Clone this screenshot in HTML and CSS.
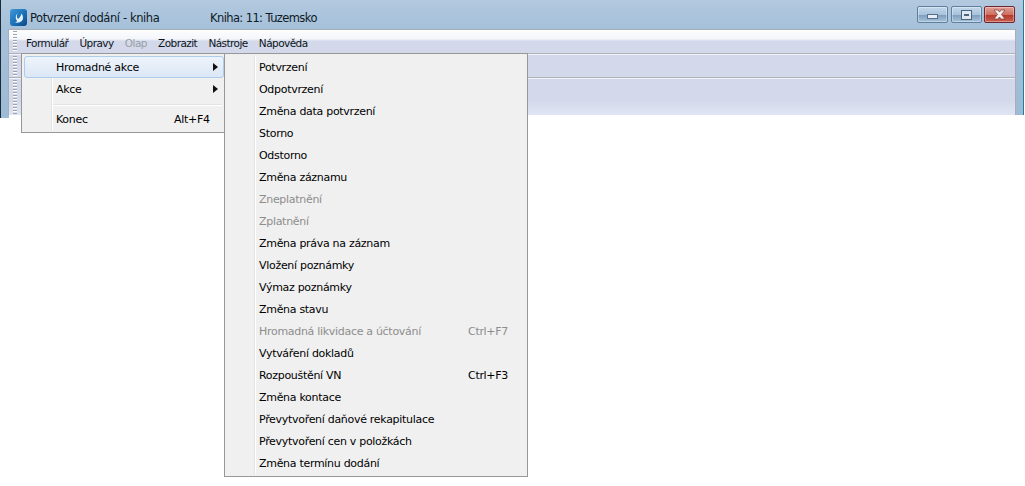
FILE: index.html
```html
<!DOCTYPE html>
<html lang="cs">
<head>
<meta charset="utf-8">
<title>Potvrzení dodání - kniha</title>
<link rel="stylesheet" href="styles.css">
</head>
<body>
<div class="window">
  <div class="titlebar">
    <svg class="app-icon" width="17" height="17" viewBox="0 0 17 17"><defs><linearGradient id="ig" x1="0" y1="0" x2="1" y2="1"><stop offset="0" stop-color="#3f9bd8"/><stop offset=".55" stop-color="#1b6fb6"/><stop offset="1" stop-color="#0d4585"/></linearGradient></defs><rect width="17" height="17" rx="3" fill="url(#ig)"/><path d="M8 4C6.500 6 6.500 8.500 8 10C9.500 9 11 7 11.500 4.500C13 6.500 13.500 9 12.500 11C11 13.500 8 14 5 13.500C7 13 7.500 12 6.500 11C5 9 6 5.500 8 4Z" fill="#e6f2fa"/></svg>
    <span class="title-main">Potvrzení dodání - kniha</span>
    <span class="title-sub">Kniha: 11: Tuzemsko</span>
    <div class="caption-buttons">
      <div class="cap-btn"><span class="glyph-min"></span></div>
      <div class="cap-btn"><span class="glyph-max"></span></div>
      <div class="cap-btn cap-close"><svg width="17" height="11" viewBox="0 0 17 11"><path d="M3 1H7L8.500 3L10 1H14L10.500 5.500L14 10H10L8.500 8L7 10H3L6.500 5.500Z" fill="#f4eeee" stroke="#7d3a3a" stroke-width=".7"/></svg></div>
    </div>
  </div>
  <div class="client">
    <div class="band band-menu">
      <div class="grip"></div>
      <nav class="menubar">
        <span class="mi">Formulář</span>
        <span class="mi">Úpravy</span>
        <span class="mi mi-off">Olap</span>
        <span class="mi">Zobrazit</span>
        <span class="mi">Nástroje</span>
        <span class="mi">Nápověda</span>
      </nav>
    </div>
    <div class="band band-tool"><div class="grip"></div></div>
    <div class="band band-last"><div class="grip"></div></div>
  </div>
</div>

<div class="menu menu-main">
  <div class="row row-hot"><span class="label">Hromadné akce</span><span class="arrow"></span></div>
  <div class="row"><span class="label">Akce</span><span class="arrow"></span></div>
  <div class="sep"></div>
  <div class="row row-end"><span class="label">Konec</span><span class="key">Alt+F4</span></div>
</div>

<div class="menu menu-sub">
  <div class="row"><span class="label">Potvrzení</span></div>
  <div class="row"><span class="label">Odpotvrzení</span></div>
  <div class="row"><span class="label">Změna data potvrzení</span></div>
  <div class="row"><span class="label">Storno</span></div>
  <div class="row"><span class="label">Odstorno</span></div>
  <div class="row"><span class="label">Změna záznamu</span></div>
  <div class="row row-off"><span class="label">Zneplatnění</span></div>
  <div class="row row-off"><span class="label">Zplatnění</span></div>
  <div class="row"><span class="label">Změna práva na záznam</span></div>
  <div class="row"><span class="label">Vložení poznámky</span></div>
  <div class="row"><span class="label">Výmaz poznámky</span></div>
  <div class="row"><span class="label">Změna stavu</span></div>
  <div class="row row-off"><span class="label">Hromadná likvidace a účtování</span><span class="key">Ctrl+F7</span></div>
  <div class="row"><span class="label">Vytváření dokladů</span></div>
  <div class="row"><span class="label">Rozpouštění VN</span><span class="key">Ctrl+F3</span></div>
  <div class="row"><span class="label">Změna kontace</span></div>
  <div class="row"><span class="label">Převytvoření daňové rekapitulace</span></div>
  <div class="row"><span class="label">Převytvoření cen v položkách</span></div>
  <div class="row"><span class="label">Změna termínu dodání</span></div>
</div>
</body>
</html>
```
FILE: styles.css
```css
* { box-sizing: border-box; }
html, body { margin: 0; padding: 0; background: #fff; }
body {
  width: 1025px;
  height: 486px;
  overflow: hidden;
  position: relative;
  font-family: "DejaVu Sans", sans-serif;
  font-size: 11px;
  letter-spacing: -0.3px;
  color: #000;
}
.window {
  position: relative;
  width: 1024px;
  height: 115px;
  background: linear-gradient(#b2c9de 0, #a5c0da 30px, #9dbbd6 100%);
  border-left: 1px solid #1a2a36;
  border-right: 1px solid #1e7f9a;
  padding: 0 7px;
  display: flex;
  flex-direction: column;
}
.window::after {
  content: "";
  position: absolute;
  left: -1px;
  top: 115px;
  width: 8px;
  height: 3px;
  background: #9dbbd6;
  border-left: 1px solid #1a2a36;
}
.titlebar {
  height: 29px;
  flex: none;
  display: flex;
  align-items: center;
  padding-left: 2px;
  padding-top: 6px;
  color: #0e1a26;
  font-size: 11.5px;
  letter-spacing: -0.4px;
}
.app-icon { flex: none; margin-right: 3px; }
.title-main { width: 180px; }
.title-sub { letter-spacing: -0.6px; }
.caption-buttons { margin-left: auto; display: flex; gap: 3px; margin-right: 1px; margin-top: -6px; }
.cap-btn {
  width: 31px;
  height: 17px;
  border: 1px solid #5f7f9e;
  border-radius: 2px;
  background: linear-gradient(#c4d8ea 0, #a8c3dc 50%, #7f9fbe 55%, #a7c3da 100%);
  box-shadow: inset 0 0 0 1px rgba(255,255,255,.35);
  display: flex;
  align-items: center;
  justify-content: center;
}
.cap-close {
  margin-left: -1px;
  border-color: #6f2630;
  background: linear-gradient(#e0a097 0, #cf6f60 50%, #b63a2c 55%, #c8604f 100%);
}
.glyph-min { width: 11px; height: 5px; margin-top: 4px; background: #e8eef4; border: 1px solid #56708c; }
.glyph-max {
  width: 11px;
  height: 10px;
  background: #dfe8f0;
  border: 1px solid #4a6580;
  display: flex;
  align-items: center;
  justify-content: center;
}
.glyph-max::after { content: ""; width: 5px; height: 2px; background: #4a6580; }
.client {
  flex: 1;
  border: 1px solid #a9adb5;
  border-bottom: 0;
  display: flex;
  flex-direction: column;
}
.band {
  display: flex;
  background: #d3d9ea;
  border-bottom: 1px solid #aeb2ba;
  border-top: 1px solid #f2f4fa;
}
.band-menu {
  height: 24px;
  border-top: 0;
  background: linear-gradient(#fdfdfe 0, #f4f6fb 9px, #d3d9ea 11px, #d3d9ea 100%);
}
.band-tool { height: 24px; }
.band-last { flex: 1; border-bottom: 0; background: linear-gradient(#d3d9ea 0, #d3d9ea 60%, #dfe5f4 100%); }
.grip {
  width: 4px;
  margin-left: 4px;
  margin-top: 1px;
  margin-bottom: 1px;
  flex: none;
  background-image: linear-gradient(#9ea3ad 0 1px, #fff 1px 2px, transparent 2px);
  background-size: 3px 3px;
}
.menubar {
  display: flex;
  margin-left: 9px;
  height: 22px;
  align-items: flex-end;
  padding-bottom: 3px;
  gap: 11.2px;
  font-size: 10.5px;
  letter-spacing: -0.56px;
}
.mi { color: #0e1420; }
.mi-off { color: #9a9ea6; }
.menu {
  position: absolute;
  background: #f0f0f0;
  border: 1px solid #979797;
  padding: 2px;
}
.menu::before {
  content: "";
  position: absolute;
  left: 29px;
  top: 2px;
  bottom: 2px;
  width: 2px;
  background: linear-gradient(90deg, #e2e3e3 0 1px, #fff 1px 2px);
}
.menu-main { left: 21px; top: 53px; width: 204px; height: 80px; }
.menu-sub { left: 224px; top: 53px; width: 304px; height: 424px; }
.row {
  position: relative;
  height: 22px;
  display: flex;
  align-items: center;
  padding-left: 32px;
}
.row-off { color: #8d8d8d; }
.row-hot {
  border: 1px solid #aeccec;
  border-radius: 3px;
  background: linear-gradient(#eef4fb, #dbe7f5);
  margin-right: -2px;
  padding-left: 31px;
}
.menu-main .row { padding-left: 32px; }
.menu-main .row-hot { padding-left: 31px; }
.label { flex: 1; }
.key { width: 57px; }
.menu-main .key { width: 48px; }
.arrow {
  width: 0;
  height: 0;
  margin-right: 4px;
  border-left: 5px solid #111;
  border-top: 4px solid transparent;
  border-bottom: 4px solid transparent;
}
.row-hot .arrow { margin-right: 5px; }
.sep {
  height: 2px;
  margin: 4px 0 2px 29px;
  background: linear-gradient(#e2e3e3 0 1px, #fff 1px 2px);
}
```
